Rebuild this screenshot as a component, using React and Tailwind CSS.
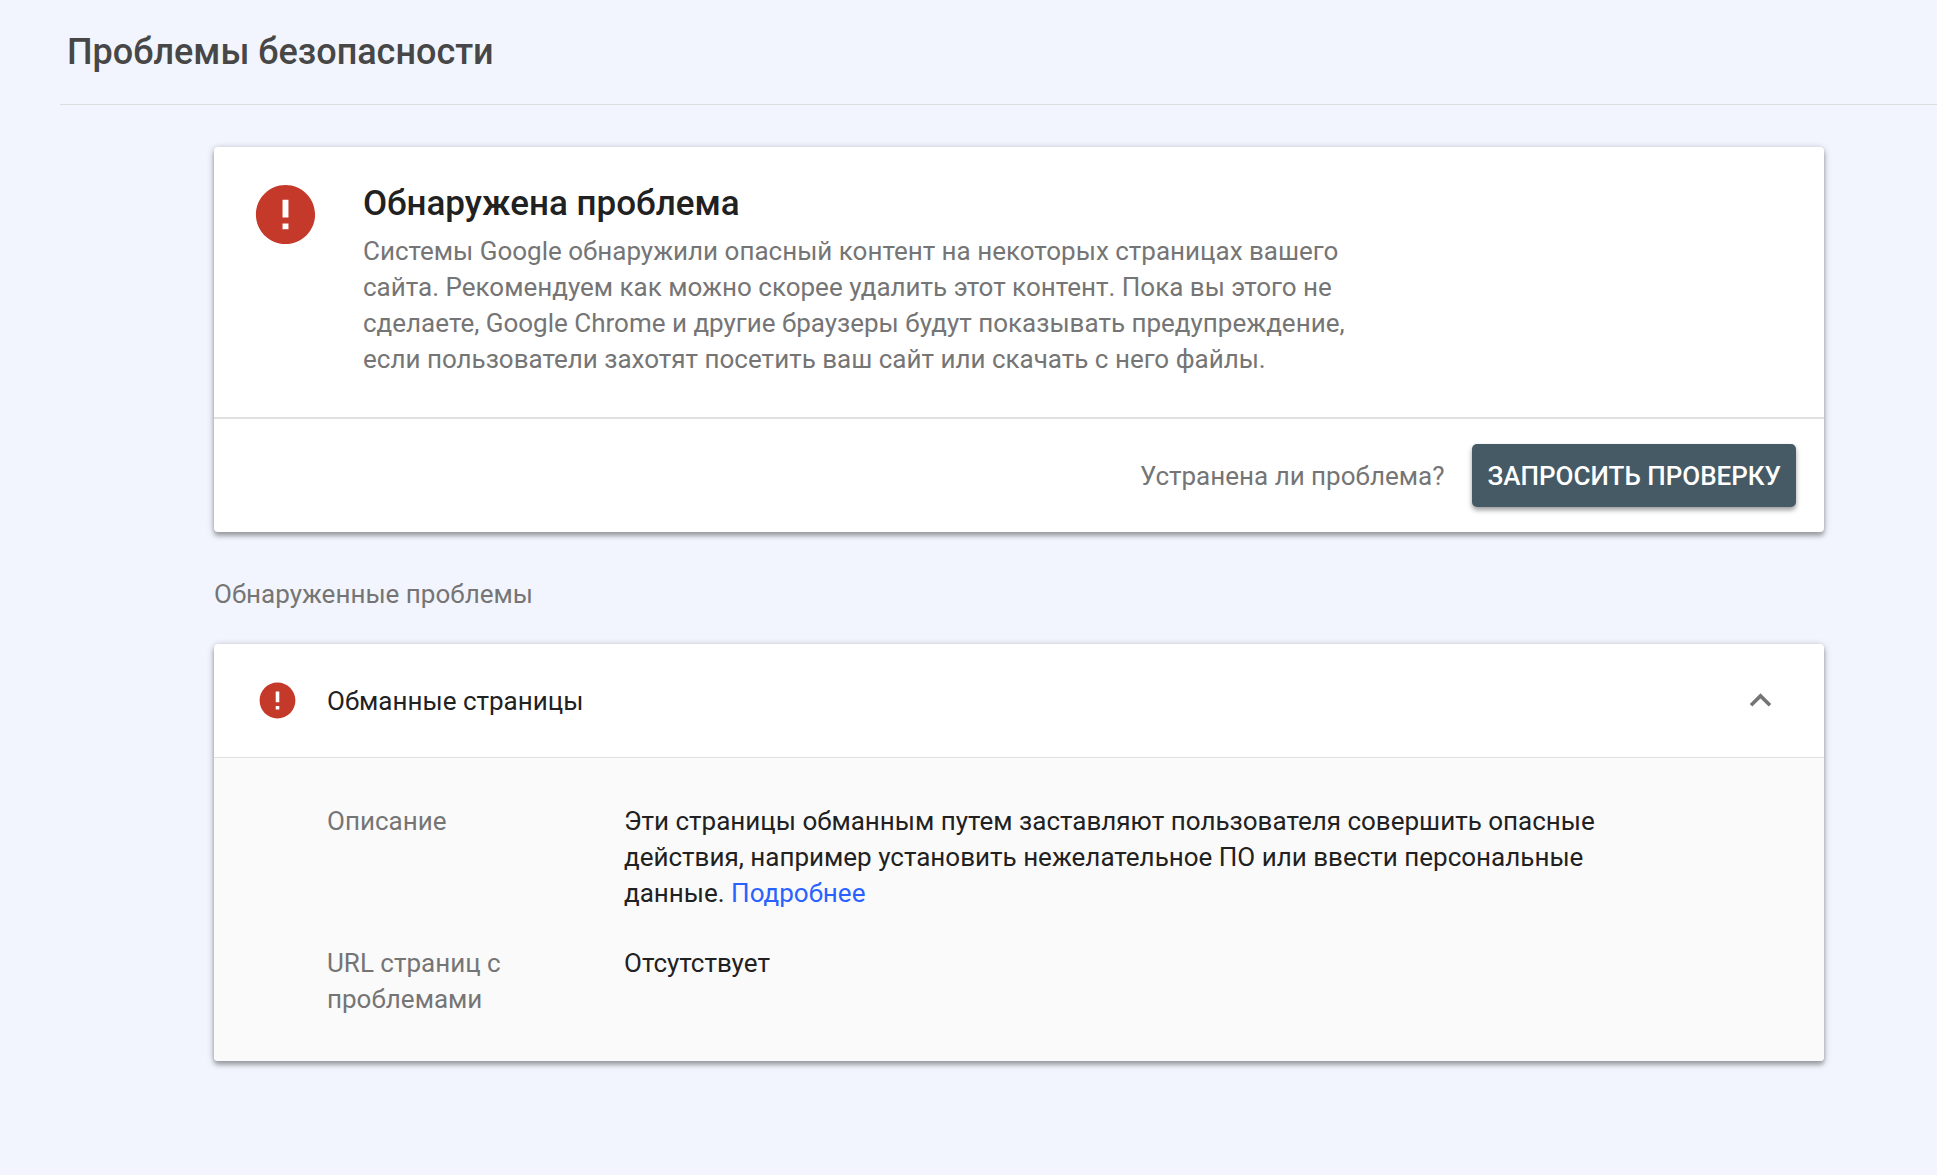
function ErrorIcon({ className }) {
  return (
    <svg viewBox="0 0 24 24" fill="currentColor" aria-hidden="true" className={className}>
      <path d="M12 2C6.48 2 2 6.48 2 12s4.48 10 10 10 10-4.48 10-10S17.52 2 12 2zm1 15h-2v-2h2v2zm0-4h-2V7h2v6z" />
    </svg>
  );
}

function Card({ children }) {
  return (
    <section className="overflow-clip rounded-[4px] bg-white shadow-[0_4px_4px_rgba(0,0,0,0.24),0_0_4px_rgba(0,0,0,0.08),0_2px_8px_rgba(0,0,0,0.2)]">
      {children}
    </section>
  );
}

function DetailRow({ label, children }) {
  return (
    <div className="flex">
      <dt className="w-[297px] shrink-0 pr-20 text-[#757575]">{label}</dt>
      <dd className="max-w-[1010px] text-[#212121]">{children}</dd>
    </div>
  );
}

export default function App() {
  return (
    <div className="min-h-screen bg-[#f2f5fd] pb-28 font-[Roboto,sans-serif] text-[26px] leading-9">
      <header className="ml-[60px] border-b border-[#dadfdc] px-[7px] py-[30px]">
        <h1 className="text-[36px] leading-[44px] font-medium text-[#474747]">Проблемы безопасности</h1>
      </header>

      <main className="mt-[42px] mr-[113px] ml-[214px]">
        <Card>
          <div className="flex gap-[42px] border-b-2 border-[#e0e0e0] pt-8 pb-10 pl-9">
            <ErrorIcon className="size-[71px] shrink-0 text-[#c5392a]" />
            <div className="max-w-[1020px]">
              <h2 className="text-[35px] leading-[50px] font-medium text-[#212121]">Обнаружена проблема</h2>
              <p className="mt-1 text-[#757575]">
                Системы Google обнаружили опасный контент на некоторых страницах вашего сайта. Рекомендуем как можно
                скорее удалить этот контент. Пока вы этого не сделаете, Google Chrome и другие браузеры будут показывать
                предупреждение, если пользователи захотят посетить ваш сайт или скачать с него файлы.
              </p>
            </div>
          </div>
          <div className="flex items-center justify-end gap-7 px-7 py-[25px]">
            <span className="text-[#757575]">Устранена ли проблема?</span>
            <button
              type="button"
              className="h-[63px] rounded-[5px] bg-[#455a64] px-[15px] font-medium text-white uppercase shadow-[0_3px_5px_rgba(0,0,0,0.4)]"
            >
              Запросить проверку
            </button>
          </div>
        </Card>

        <h2 className="mt-11 mb-8 text-[#757575]">Обнаруженные проблемы</h2>

        <Card>
          <button
            type="button"
            aria-expanded="true"
            className="flex h-[114px] w-full items-center border-b border-[#e0e0e0] px-[42px] text-left text-[#212121]"
          >
            <ErrorIcon className="size-[43px] text-[#c5392a]" />
            <span className="ml-7 grow">Обманные страницы</span>
            <svg viewBox="0 0 24 24" fill="currentColor" aria-hidden="true" className="size-[43px] text-[#757575]">
              <path d="M12 8l-6 6 1.41 1.41L12 10.83l4.59 4.58L18 14z" />
            </svg>
          </button>
          <dl className="flex flex-col gap-[34px] bg-[#fafafa] pt-[45px] pr-12 pb-11 pl-[113px]">
            <DetailRow label="Описание">
              Эти страницы обманным путем заставляют пользователя совершить опасные действия, например установить
              нежелательное ПО или ввести персональные данные.{" "}
              <a href="#details" className="text-[#2962ff]">
                Подробнее
              </a>
            </DetailRow>
            <DetailRow label="URL страниц с проблемами">Отсутствует</DetailRow>
          </dl>
        </Card>
      </main>
    </div>
  );
}
